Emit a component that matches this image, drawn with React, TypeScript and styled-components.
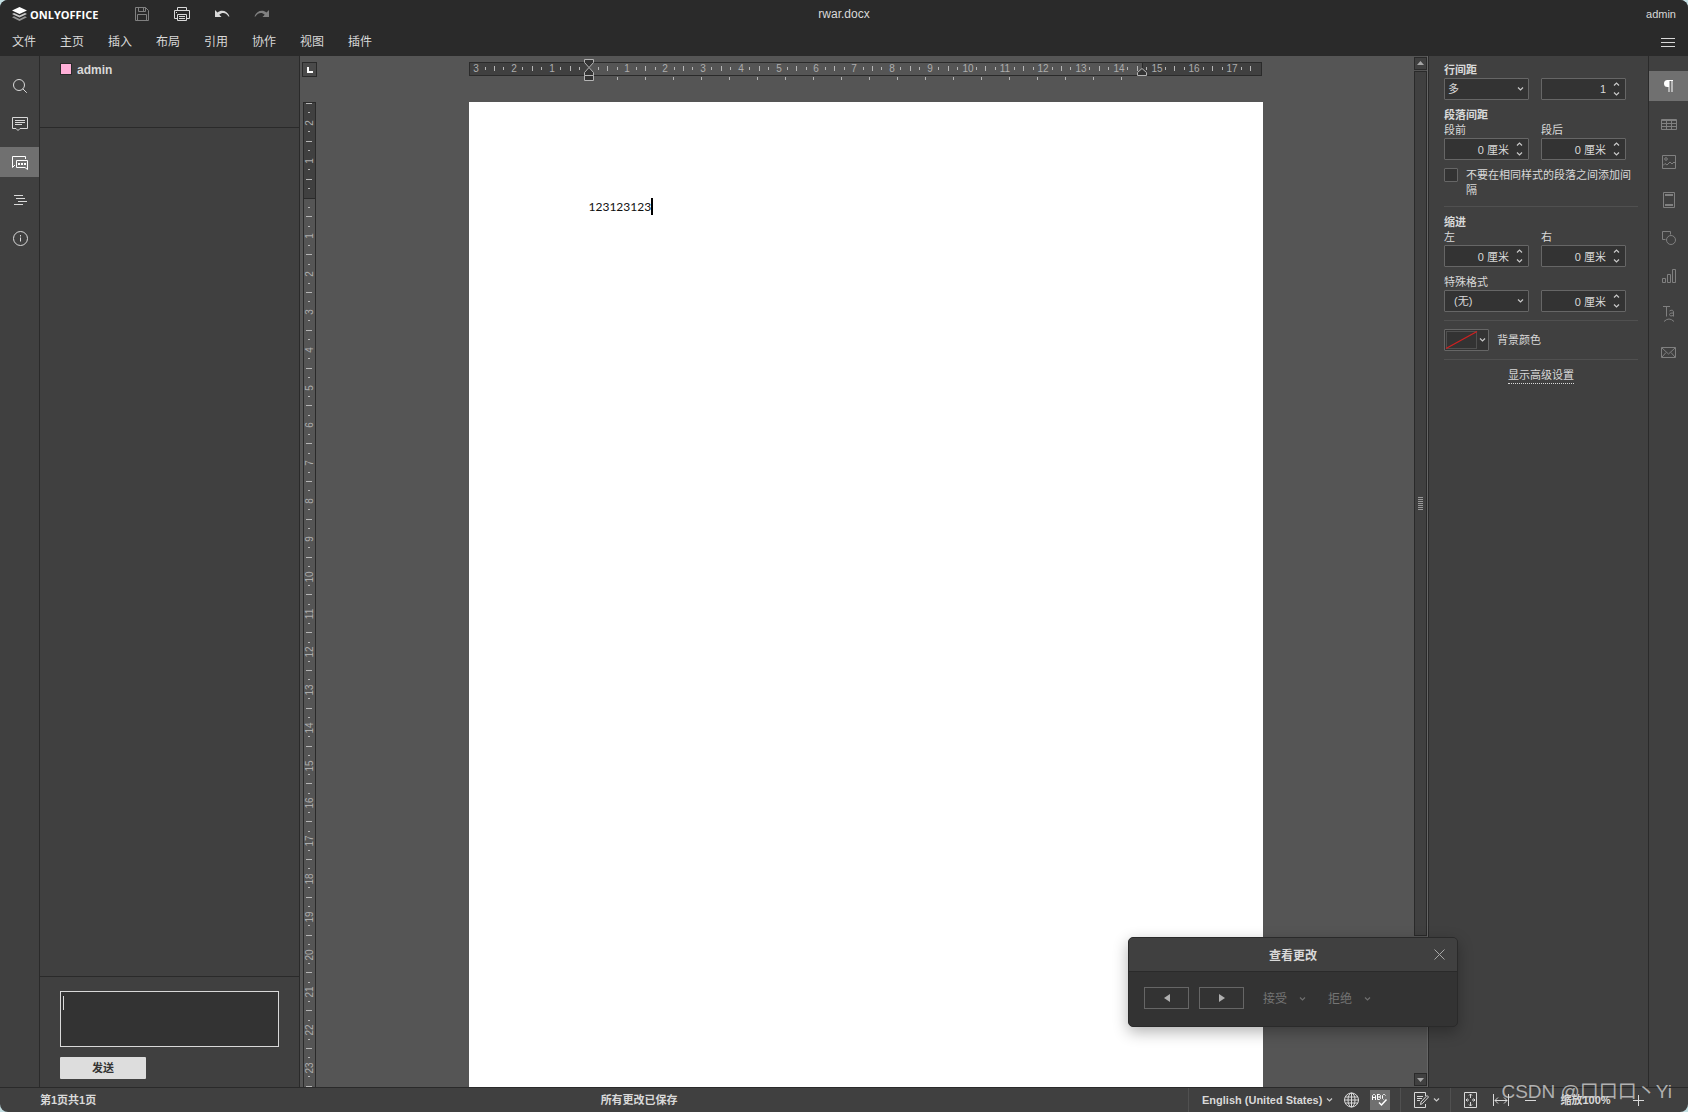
import React from "react";
import styled, { createGlobalStyle, css } from "styled-components";

const c = {
  header: "#2a2a2a",
  panel: "#404040",
  canvas: "#555555",
  field: "#333333",
  line: "#2a2a2a",
  fieldLine: "#666666",
  text: "#d9d9d9",
  muted: "#808080",
  active: "#707070",
};

const GlobalStyle = createGlobalStyle`
  *, *::before, *::after { box-sizing: border-box; }
  body {
    margin: 0;
    background: #c4dfe3;
    color: ${c.text};
    font: 11px/15px "Liberation Sans", "Noto Sans CJK SC", sans-serif;
  }
  button, input, select, textarea { font: inherit; color: inherit; margin: 0; padding: 0; }
  button { background: none; border: 0; }
  svg { display: block; flex: none; }
`;

const Shell = styled.div`
  position: relative;
  display: flex;
  flex-direction: column;
  height: 100vh;
  background: ${c.panel};
  border-radius: 8px;
  overflow: hidden;
`;

/* ---------- header ---------- */
const Header = styled.header`
  background: ${c.header};
`;
const TitleRow = styled.div`
  display: grid;
  grid-template-columns: 1fr auto 1fr;
  align-items: center;
  height: 28px;
  padding: 0 12px;
`;
const TitleLeft = styled.div`
  display: flex;
  align-items: center;
`;
const Brand = styled.div`
  display: flex;
  align-items: center;
  gap: 3px;
  width: 120px;
  color: #fff;
  font: 700 11px/15px "Open Sans", sans-serif;
`;
const QuickTools = styled.div`
  display: flex;
  gap: 20px;
`;
const QuickButton = styled.button<{ $dim?: boolean }>`
  display: grid;
  place-items: center;
  width: 20px;
  height: 20px;
  color: ${(p) => (p.$dim ? c.muted : c.text)};
`;
const DocName = styled.h1`
  margin: 0;
  font-size: 12px;
  font-weight: 400;
`;
const User = styled.span`
  justify-self: end;
`;
const TabRow = styled.nav`
  display: flex;
  align-items: center;
  height: 28px;
  padding-right: 13px;
`;
const Tab = styled.button`
  width: 48px;
  height: 28px;
  font-size: 12px;
`;
const MenuButton = styled.button`
  margin-left: auto;
`;

/* ---------- body ---------- */
const Body = styled.div`
  display: flex;
  flex: 1;
  min-height: 0;
`;
const Rail = styled.nav<{ $side: "left" | "right" }>`
  display: flex;
  flex-direction: column;
  gap: 8px;
  flex: none;
  width: 40px;
  padding-top: 15px;
  border-${(p) => (p.$side === "left" ? "right" : "left")}: 1px solid ${c.line};
`;
const RailButton = styled.button<{ $on?: boolean; $dim?: boolean }>`
  display: grid;
  place-items: center;
  height: 30px;
  padding-left: 1px;
  color: ${(p) => (p.$on ? "#fff" : p.$dim ? c.muted : c.text)};
  background: ${(p) => (p.$on ? c.active : "none")};
`;
const ChatPanel = styled.aside`
  display: flex;
  flex-direction: column;
  flex: none;
  width: 260px;
  border-right: 1px solid ${c.line};
`;
const Users = styled.ul`
  height: 72px;
  margin: 0;
  padding: 7px 20px;
  list-style: none;
  border-bottom: 1px solid ${c.line};
`;
const UserItem = styled.li`
  display: flex;
  gap: 5px;
  font-size: 12px;
  font-weight: 700;
`;
const Swatch = styled.span`
  width: 12px;
  height: 12px;
  background: #ffb0d8;
  border: 1px solid ${c.line};
`;
const Messages = styled.div`
  flex: 1;
`;
const Composer = styled.form`
  display: flex;
  flex-direction: column;
  gap: 10px;
  padding: 14px 20px 8px;
  border-top: 1px solid ${c.line};
`;
const MessageBox = styled.div`
  display: flex;
  height: 56px;
  padding: 4px 2px;
  background: ${c.field};
  border: 1px solid ${c.text};
`;
const Message = styled.textarea`
  flex: 1;
  background: none;
  border: 0;
  outline: 0;
  resize: none;
`;
const Caret = styled.span<{ $dark?: boolean }>`
  width: ${(p) => (p.$dark ? 2 : 1)}px;
  height: ${(p) => (p.$dark ? 17 : 14)}px;
  background: ${(p) => (p.$dark ? "#000" : c.text)};
`;
const SendButton = styled.button`
  width: 86px;
  height: 22px;
  color: #333;
  background: #ddd;
  border-radius: 1px;
  font-weight: 700;
`;

/* ---------- document ---------- */
const Editor = styled.main`
  display: grid;
  grid-template-columns: 17px 1fr;
  grid-template-rows: 46px 1fr;
  flex: 1;
  min-width: 0;
  background: ${c.canvas};
`;
const Corner = styled.button`
  display: grid;
  place-items: center;
  width: 15px;
  height: 15px;
  margin: 6px 0 0 2px;
  border: 1px solid ${c.line};
  background: #4a4a4a;
`;
const TopRuler = styled.div`
  display: flex;
  justify-content: center;
  padding-top: 1px;
`;
const SideRuler = styled.div`
  display: flex;
  justify-content: flex-end;
  padding-right: 1px;
  overflow: hidden;
`;
const Viewport = styled.div`
  display: flex;
  justify-content: center;
  overflow: hidden;
`;
const Paper = styled.article`
  width: 794px;
  height: 1123px;
  padding: 96px 120px;
  background: #fff;
  color: #111;
`;
const Line = styled.p`
  display: flex;
  align-items: center;
  margin: 0;
  font: 12px/17px Lato, sans-serif;
`;
const ScrollBar = styled.div`
  display: flex;
  flex-direction: column;
  gap: 1px;
  flex: none;
  width: 14px;
  padding: 1px 1px 1px 0;
  background: ${c.canvas};
  border-right: 1px solid #666;
`;
const ScrollButton = styled.button`
  display: grid;
  place-items: center;
  width: 13px;
  height: 13px;
  border: 1px solid ${c.line};
  background: ${c.panel};
`;
const ScrollTrack = styled.div`
  flex: 1;
`;
const Thumb = styled.div`
  display: grid;
  place-items: center;
  width: 13px;
  height: 86.4%;
  border: 1px solid ${c.line};
  background: ${c.panel};
`;
const Grip = styled.span`
  width: 5px;
  height: 13px;
  background: repeating-linear-gradient(#999 0 1px, ${c.panel} 1px 2px);
`;

/* ---------- paragraph settings ---------- */
const Settings = styled.aside`
  display: flex;
  flex-direction: column;
  gap: 8px;
  flex: none;
  width: 220px;
  padding: 7px 10px 0 15px;
  border-left: 1px solid ${c.line};
`;
const Group = styled.fieldset`
  margin: 0;
  padding: 0;
  border: 0;
  min-width: 0;
`;
const Pair = styled.div`
  display: flex;
  align-items: flex-end;
  gap: 12px;
`;
const Field = styled.div`
  display: flex;
  flex-direction: column;
  width: 85px;
`;
const Label = styled.label<{ $bold?: boolean }>`
  white-space: nowrap;
  font-weight: ${(p) => (p.$bold ? 700 : 400)};
`;
const Legend = styled.legend`
  padding: 0;
  font-weight: 700;
`;
const box = css`
  display: flex;
  align-items: center;
  height: 22px;
  background: ${c.field};
  border: 1px solid ${c.fieldLine};
  border-radius: 1px;
`;
const SelectBox = styled.div`
  ${box}
  padding-right: 4px;
`;
const SelectInput = styled.select<{ $indent?: boolean }>`
  flex: 1;
  min-width: 0;
  height: 20px;
  padding-left: ${(p) => (p.$indent ? 9 : 3)}px;
  appearance: none;
  background: none;
  border: 0;
  outline: 0;
`;
const SpinBox = styled.div`
  ${box}
`;
const SpinInput = styled.input`
  flex: 1;
  min-width: 0;
  height: 20px;
  padding-right: 2px;
  text-align: right;
  background: none;
  border: 0;
  outline: 0;
`;
const SpinButtons = styled.div`
  display: flex;
  flex-direction: column;
  width: 17px;
`;
const SpinButton = styled.button`
  display: grid;
  place-items: center;
  height: 10px;
`;
const Check = styled.label`
  display: flex;
  gap: 8px;
`;
const CheckInput = styled.input`
  flex: none;
  width: 14px;
  height: 14px;
  appearance: none;
  background: ${c.field};
  border: 1px solid ${c.fieldLine};
  border-radius: 1px;
`;
const Rule = styled.hr`
  width: 100%;
  height: 1px;
  margin: 0;
  border: 0;
  background: #505050;
`;
const ColorRow = styled.div`
  display: flex;
  align-items: center;
  gap: 8px;
`;
const ColorButton = styled.button`
  ${box}
  gap: 1px;
  width: 45px;
`;
const Advanced = styled.a`
  align-self: center;
  color: inherit;
  text-decoration: none;
  border-bottom: 1px dotted ${c.text};
`;

/* ---------- status bar ---------- */
const Status = styled.footer`
  display: flex;
  align-items: center;
  height: 25px;
  padding: 0 44px 0 40px;
  border-top: 1px solid ${c.line};
  font-weight: 700;
`;
const Saved = styled.span`
  flex: 1;
  padding-right: 6px;
  text-align: center;
`;
const StatusGroup = styled.div<{ $gap: number; $width: number }>`
  display: flex;
  align-items: center;
  align-self: stretch;
  gap: ${(p) => p.$gap}px;
  width: ${(p) => p.$width}px;
  padding-left: 13px;
  border-left: 1px solid #505050;
`;
const StatusButton = styled.button<{ $on?: boolean }>`
  display: flex;
  align-items: center;
  justify-content: center;
  gap: 4px;
  min-width: ${(p) => (p.$on ? 20 : 0)}px;
  height: 20px;
  font-weight: 700;
  white-space: nowrap;
  background: ${(p) => (p.$on ? c.active : "none")};
`;
const ZoomLabel = styled.span`
  width: 95px;
  text-align: center;
  white-space: nowrap;
`;

/* ---------- floating dialog ---------- */
const Dialog = styled.section`
  position: absolute;
  right: 230px;
  bottom: 85px;
  width: 330px;
  background: ${c.field};
  border: 1px solid ${c.line};
  border-radius: 5px;
  box-shadow: 0 5px 15px rgba(0, 0, 0, 0.3);
  overflow: hidden;
`;
const DialogHead = styled.div`
  display: grid;
  grid-template-columns: 36px 1fr 36px;
  align-items: center;
  height: 34px;
  background: ${c.panel};
  border-bottom: 1px solid ${c.line};
`;
const DialogTitle = styled.h2`
  grid-column: 2;
  margin: 0;
  padding-top: 3px;
  font-size: 12px;
  text-align: center;
`;
const DialogClose = styled.button`
  display: grid;
  place-items: center;
`;
const DialogBody = styled.div`
  display: flex;
  gap: 10px;
  padding: 15px;
`;
const StepButton = styled.button`
  display: grid;
  place-items: center;
  width: 45px;
  height: 22px;
  border: 1px solid ${c.fieldLine};
  color: #b0b0b0;
`;
const DecisionButton = styled.button`
  display: flex;
  align-items: center;
  gap: 12px;
  width: 55px;
  height: 24px;
  padding-left: 9px;
  font-size: 12px;
  white-space: nowrap;
  color: #757575;
`;
const Watermark = styled.div`
  position: absolute;
  right: 16px;
  bottom: 7px;
  font: 19px/26px "Liberation Sans", "Noto Sans CJK SC", sans-serif;
  color: rgba(215, 215, 215, 0.75);
  white-space: nowrap;
  pointer-events: none;
`;

/* ---------- icons ---------- */
type IconProps = { w: number; h: number; children: React.ReactNode };
const Icon = ({ w, h, children }: IconProps) => (
  <svg width={w} height={h} viewBox={`0 0 ${w} ${h}`} fill="none" stroke="currentColor" aria-hidden="true">
    {children}
  </svg>
);
const Chevron = ({ up }: { up?: boolean }) => (
  <Icon w={7} h={4}>
    <path d={up ? "M1 3.500L3.500 1 6 3.500" : "M1 .5L3.500 3 6 .5"} strokeWidth="1.200" opacity=".9" />
  </Icon>
);
const Logo = () => (
  <Icon w={15} h={14}>
    <g stroke="none" fill="#fff">
      <path d="M0 3.500L7.500 0 15 3.500 7.500 7z" />
      <path d="M0 7l2-1 5.500 2.600L13 6l2 1-7.500 3.500z" opacity=".75" />
      <path d="M0 10.300l2-1 5.500 2.600L13 9.300l2 1L7.500 14z" opacity=".5" />
    </g>
  </Icon>
);
const Save = () => (
  <Icon w={14} h={14}>
    <path d="M.5.5h10l3 3v10H.5zM3.500.5v4h7v-4M2.500 13.500v-6h9v6" />
    <path d="M8.500 1v3" />
  </Icon>
);
const Print = () => (
  <Icon w={16} h={14}>
    <path d="M3.500 3.500v-3h9v3M3.500 11.500h-3v-8h15v8h-3M3.500 7.500h9v6h-9zM5 9.500h6M5 11.500h6M2 5.500h1" />
  </Icon>
);
const Undo = ({ flip }: { flip?: boolean }) => (
  <Icon w={16} h={8}>
    <g transform={flip ? "translate(16 0) scale(-1 1)" : undefined} fill="currentColor" stroke="none">
      <path d="M1 0v7h6.500L5.300 4.700C8 2.200 12 2.500 14.500 6.500h1C13.500.8 7.500-.7 3.500 2.500z" />
    </g>
  </Icon>
);
const Menu = () => (
  <Icon w={14} h={10}>
    <path d="M0 1.500h14M0 5.500h14M0 9.500h14" />
  </Icon>
);
const Search = () => (
  <Icon w={14} h={14}>
    <circle cx="6" cy="6" r="5.500" />
    <path d="M9.800 9.800l4 4" />
  </Icon>
);
const Comment = () => (
  <Icon w={16} h={14}>
    <path d="M.5.5h15v11H8l-2 2-2-2H.5zM3 3.500h10M3 5.500h10M3 7.500h7" />
  </Icon>
);
const Chat = () => (
  <Icon w={16} h={16}>
    <path d="M13.500 5V2.500H.5v11L3 11M4.500 6.500h11v9L13 13.500H4.500z" />
    <path d="M6 10h8" strokeWidth="2" strokeDasharray="2 1" />
  </Icon>
);
const Outline = () => (
  <Icon w={14} h={10}>
    <path d="M1 .5h9M3 3.500h9M5 6.500h9M1 9.500h9" />
  </Icon>
);
const Info = () => (
  <Icon w={16} h={16}>
    <circle cx="8.500" cy="8.500" r="7" />
    <path d="M8.500 5v1.500M8.500 7.500v4" />
  </Icon>
);
const Pilcrow = () => (
  <Icon w={10} h={14}>
    <path d="M9 1H3.500a3.500 3.500 0 0 0 0 7h1v5h1V2h2v11h1V2H9z" fill="currentColor" stroke="none" />
  </Icon>
);
const Table = () => (
  <Icon w={16} h={12}>
    <path d="M.5 1.500h15v10H.5zM.5 2.500h15M.5 5.500h15M.5 8.500h15M5.500 2v10M10.500 2v10" />
  </Icon>
);
const Picture = () => (
  <Icon w={14} h={14}>
    <path d="M.5.5h13v13H.5zM1 10.500l2-2 2 1.500 3-3 2 2 2-2 1.500 1.500" />
    <circle cx="4" cy="4" r="1.300" />
  </Icon>
);
const HeaderFooter = () => (
  <Icon w={12} h={16}>
    <path d="M.5.5h11v15H.5z" />
    <path d="M2 3h8M2 13h8" strokeWidth="2" />
  </Icon>
);
const Shapes = () => (
  <Icon w={14} h={14}>
    <path d="M3.500 8.500h-3v-8h8v3" />
    <circle cx="9" cy="9" r="4.500" />
  </Icon>
);
const Chart = () => (
  <Icon w={14} h={14}>
    <path d="M.5 9.500h3v4h-3zM5.500 5.500h3v8h-3zM10.500.5h3v13h-3z" />
  </Icon>
);
const TextArt = () => (
  <Icon w={12} h={16}>
    <path d="M0 .5h7M3.500.5v10" />
    <path d="M6.500 5q3.500-2 4 1v4.500M10.500 7q-4-.5-4 1.500 0 2.500 4 1M1 15.500q5-5 10 0" />
  </Icon>
);
const Mail = () => (
  <Icon w={16} h={12}>
    <path d="M.5 1.500h14v10H.5zM1 2l6.500 6L14 2M1 11l4-4.500M14 11l-4-4.500" />
  </Icon>
);
const Globe = () => (
  <Icon w={15} h={16}>
    <circle cx="7.500" cy="8" r="7" />
    <ellipse cx="7.500" cy="8" rx="3.500" ry="7" />
    <path d="M7.500 1v14M1 5h13M0 8h15M1 11h13" />
  </Icon>
);
const Spelling = () => (
  <Icon w={16} h={14}>
    <g stroke="#fff">
      <path d="M.5 7V2.500l1-1h1l1 1V7M.5 4.500h3" />
      <path d="M5.500 1v5.500h2l1-1v-1l-1-.5 1-.5v-1l-1-1h-2M5.500 4h2.500" />
      <path d="M13.500 2.500l-1-1h-1l-1 1v3l1 1" />
      <path d="M7 9.500l2.500 2.500 5-5.500" strokeWidth="1.500" />
    </g>
  </Icon>
);
const Track = () => (
  <Icon w={15} h={16}>
    <path d="M11.500 4V.5H.5v15h11V12M3 4.500h6M3 6.500h5M3 8.500h3" />
    <path d="M6.500 12.500l.5-2.500 6-6.500 1.500 1.500-6 6.500z" />
  </Icon>
);
const FitPage = () => (
  <Icon w={13} h={16}>
    <path d="M.5.5h12v15H.5zM6.500 2v4M5 3.500L6.500 2 8 3.500M6.500 14v-4M5 12.500L6.500 14 8 12.500M2 8h3M3.500 6.500L2 8l1.500 1.500M11 8H8M9.500 6.500L11 8 9.500 9.500" />
  </Icon>
);
const FitWidth = () => (
  <Icon w={16} h={12}>
    <path d="M.5 0v12M15.500 0v12M2 6.500h12M5 3.500l-3 3 3 3M11 3.500l3 3-3 3" />
  </Icon>
);

/* ---------- rulers ---------- */
const CM = 37.8;
type Mark = { at: number; kind: "label" | "half" | "quarter"; text?: string };
const marks = (from: number, to: number): Mark[] => {
  const out: Mark[] = [];
  for (let q = Math.ceil((from + 3) / (CM / 4)); q * (CM / 4) < to - 3; q++) {
    if (q === 0) continue;
    const at = Math.floor(q * (CM / 4));
    if (q % 4 === 0) out.push({ at, kind: "label", text: String(Math.abs(q / 4)) });
    else out.push({ at, kind: q % 2 === 0 ? "half" : "quarter" });
  }
  return out;
};
const rulerFont = '10px "Liberation Sans", sans-serif';

const HorizontalRuler = () => (
  <svg width="794" height="30" viewBox="0 0 794 30" role="img" aria-label="水平标尺">
    <rect x=".5" y="5.500" width="792" height="13" fill="#555" stroke={c.line} />
    <rect x="1" y="6" width="119" height="12" fill={c.panel} />
    <rect x="673" y="6" width="119" height="12" fill={c.panel} />
    <path d="M673.500 5v13" stroke={c.line} />
    {marks(-120, 787).filter((m) => m.at < 665).map((m) =>
      m.kind === "label" ? (
        <text key={m.at} x={121 + m.at} y="15" textAnchor="middle" fill="#adadad" style={{ font: rulerFont }}>
          {m.text}
        </text>
      ) : (
        <rect key={m.at} x={120 + m.at} y={m.kind === "half" ? 9 : 10} width="1" height={m.kind === "half" ? 5 : 3} fill="#b5b5b5" />
      )
    )}
    {Array.from({ length: 19 }, (_, i) => (
      <rect key={i} x={148 + i * 28} y="20" width="1" height="3" fill="#b5b5b5" />
    ))}
    <g fill={c.field} stroke="#b5b5b5">
      <path d="M115.500 2.500h9v3l-4.500 5-4.500-5z" />
      <path d="M115.500 18.500v-3l4.500-5 4.500 5v3z" />
      <path d="M115.500 18.500h9v5h-9z" />
      <path d="M668.500 18.500v-3l4.500-4 4.500 4v3z" />
    </g>
  </svg>
);

const VerticalRuler = () => (
  <svg width="13" height="1123" viewBox="0 0 13 1123" role="img" aria-label="垂直标尺">
    <rect x=".5" y=".5" width="12" height="1122" fill="#555" stroke={c.line} />
    <rect x="1" y="1" width="11" height="95" fill={c.panel} />
    <path d="M0 96.500h13" stroke={c.line} />
    {marks(-98, 893).map((m) =>
      m.kind === "label" ? (
        <text
          key={m.at}
          textAnchor="middle"
          transform={`translate(10 ${97 + m.at}) rotate(-90)`}
          fill="#adadad"
          style={{ font: rulerFont }}
        >
          {m.text}
        </text>
      ) : (
        <rect key={m.at} x={m.kind === "half" ? 3 : 5} y={96 + m.at} width={m.kind === "half" ? 6 : 2} height="1" fill="#b5b5b5" />
      )
    )}
  </svg>
);

/* ---------- composed controls ---------- */
const Select = ({ id, value, indent }: { id: string; value: string; indent?: boolean }) => (
  <SelectBox>
    <SelectInput id={id} $indent={indent} defaultValue={value}>
      <option>{value}</option>
    </SelectInput>
    <Chevron />
  </SelectBox>
);
const Spinner = ({ id, value, label }: { id: string; value: string; label?: string }) => (
  <SpinBox>
    <SpinInput id={id} defaultValue={value} aria-label={label} />
    <SpinButtons>
      <SpinButton type="button" aria-label="增加">
        <Chevron up />
      </SpinButton>
      <SpinButton type="button" aria-label="减少">
        <Chevron />
      </SpinButton>
    </SpinButtons>
  </SpinBox>
);

const tabs = ["文件", "主页", "插入", "布局", "引用", "协作", "视图", "插件"];
const leftTools = [
  { name: "搜索", icon: <Search /> },
  { name: "批注", icon: <Comment /> },
  { name: "聊天", icon: <Chat />, on: true },
  { name: "导航", icon: <Outline /> },
  { name: "关于", icon: <Info /> },
];
const rightTools = [
  { name: "段落设置", icon: <Pilcrow />, on: true },
  { name: "表格设置", icon: <Table /> },
  { name: "图像设置", icon: <Picture /> },
  { name: "页眉页脚设置", icon: <HeaderFooter /> },
  { name: "形状设置", icon: <Shapes /> },
  { name: "图表设置", icon: <Chart /> },
  { name: "艺术字设置", icon: <TextArt /> },
  { name: "邮件合并", icon: <Mail /> },
];

export default function App() {
  return (
    <Shell>
      <GlobalStyle />
      <Header>
        <TitleRow>
          <TitleLeft>
            <Brand>
              <Logo />
              ONLYOFFICE
            </Brand>
            <QuickTools>
              <QuickButton $dim aria-label="保存"><Save /></QuickButton>
              <QuickButton aria-label="打印"><Print /></QuickButton>
              <QuickButton aria-label="撤消"><Undo /></QuickButton>
              <QuickButton $dim aria-label="重做"><Undo flip /></QuickButton>
            </QuickTools>
          </TitleLeft>
          <DocName>rwar.docx</DocName>
          <User>admin</User>
        </TitleRow>
        <TabRow>
          {tabs.map((t) => (
            <Tab key={t}>{t}</Tab>
          ))}
          <MenuButton aria-label="视图设置"><Menu /></MenuButton>
        </TabRow>
      </Header>

      <Body>
        <Rail $side="left">
          {leftTools.map((t) => (
            <RailButton key={t.name} aria-label={t.name} $on={t.on}>{t.icon}</RailButton>
          ))}
        </Rail>

        <ChatPanel>
          <Users>
            <UserItem><Swatch />admin</UserItem>
          </Users>
          <Messages />
          <Composer onSubmit={(e) => e.preventDefault()}>
            <MessageBox>
              <Caret />
              <Message aria-label="消息" />
            </MessageBox>
            <SendButton>发送</SendButton>
          </Composer>
        </ChatPanel>

        <Editor>
          <Corner aria-label="制表符">
            <Icon w={7} h={7}>
              <path d="M2 1v5h5" strokeWidth="2" stroke="#fff" />
            </Icon>
          </Corner>
          <TopRuler><HorizontalRuler /></TopRuler>
          <SideRuler><VerticalRuler /></SideRuler>
          <Viewport>
            <Paper>
              <Line>123123123<Caret $dark /></Line>
            </Paper>
          </Viewport>
        </Editor>

        <ScrollBar>
          <ScrollButton aria-label="向上滚动">
            <Icon w={7} h={5}><path d="M0 4l3.500-4L7 4z" fill="#a6a6a6" stroke="none" /></Icon>
          </ScrollButton>
          <ScrollTrack>
            <Thumb>
              <Grip />
            </Thumb>
          </ScrollTrack>
          <ScrollButton aria-label="向下滚动">
            <Icon w={7} h={5}><path d="M0 1l3.500 4L7 1z" fill="#a6a6a6" stroke="none" /></Icon>
          </ScrollButton>
        </ScrollBar>

        <Settings>
          <Pair>
            <Field>
              <Label $bold htmlFor="line-rule">行间距</Label>
              <Select id="line-rule" value="多" />
            </Field>
            <Field>
              <Spinner id="line-value" value="1" label="行间距值" />
            </Field>
          </Pair>
          <Group>
            <Legend>段落间距</Legend>
            <Pair>
              <Field>
                <Label htmlFor="before">段前</Label>
                <Spinner id="before" value="0 厘米" />
              </Field>
              <Field>
                <Label htmlFor="after">段后</Label>
                <Spinner id="after" value="0 厘米" />
              </Field>
            </Pair>
          </Group>
          <Check>
            <CheckInput type="checkbox" />
            不要在相同样式的段落之间添加间隔
          </Check>
          <Rule />
          <Group>
            <Legend>缩进</Legend>
            <Pair>
              <Field>
                <Label htmlFor="left">左</Label>
                <Spinner id="left" value="0 厘米" />
              </Field>
              <Field>
                <Label htmlFor="right">右</Label>
                <Spinner id="right" value="0 厘米" />
              </Field>
            </Pair>
          </Group>
          <Pair>
            <Field>
              <Label htmlFor="special">特殊格式</Label>
              <Select id="special" value="(无)" indent />
            </Field>
            <Field>
              <Spinner id="special-value" value="0 厘米" label="特殊格式值" />
            </Field>
          </Pair>
          <Rule />
          <ColorRow>
            <ColorButton id="fill" aria-label="背景颜色">
              <Icon w={33} h={20}>
                <rect x="1.500" y="1.500" width="30" height="17" stroke="#505050" />
                <path d="M1 18.500L32 1.500" stroke="#d02020" strokeWidth="1.300" />
              </Icon>
              <Chevron />
            </ColorButton>
            <Label htmlFor="fill">背景颜色</Label>
          </ColorRow>
          <Rule />
          <Advanced href="#advanced">显示高级设置</Advanced>
        </Settings>

        <Rail $side="right">
          {rightTools.map((t) => (
            <RailButton key={t.name} aria-label={t.name} $on={t.on} $dim>{t.icon}</RailButton>
          ))}
        </Rail>
      </Body>

      <Status>
        <span>第1页共1页</span>
        <Saved>所有更改已保存</Saved>
        <StatusGroup $gap={11} $width={212}>
          <StatusButton>English (United States)<Chevron /></StatusButton>
          <StatusButton aria-label="设置文档语言"><Globe /></StatusButton>
          <StatusButton $on aria-label="拼写检查"><Spelling /></StatusButton>
        </StatusGroup>
        <StatusGroup $gap={0} $width={50}>
          <StatusButton aria-label="跟踪更改"><Track /><Chevron /></StatusButton>
        </StatusGroup>
        <StatusGroup $gap={16} $width={88}>
          <StatusButton aria-label="适合页面"><FitPage /></StatusButton>
          <StatusButton aria-label="适合宽度"><FitWidth /></StatusButton>
          <StatusButton aria-label="缩小">
            <Icon w={11} h={12}><path d="M0 6.500h11" /></Icon>
          </StatusButton>
        </StatusGroup>
        <ZoomLabel>缩放100%</ZoomLabel>
        <StatusButton aria-label="放大">
          <Icon w={11} h={12}><path d="M0 6.500h11M5.500 1v11" /></Icon>
        </StatusButton>
      </Status>

      <Dialog role="dialog" aria-label="查看更改">
        <DialogHead>
          <DialogTitle>查看更改</DialogTitle>
          <DialogClose aria-label="关闭">
            <Icon w={11} h={11}><path d="M.5.5l10 10M10.500.5l-10 10" stroke="#a6a6a6" /></Icon>
          </DialogClose>
        </DialogHead>
        <DialogBody>
          <StepButton aria-label="上一处">
            <Icon w={7} h={8}><path d="M7 0v8L1 4z" fill="currentColor" stroke="none" /></Icon>
          </StepButton>
          <StepButton aria-label="下一处">
            <Icon w={7} h={8}><path d="M1 0v8l6-4z" fill="currentColor" stroke="none" /></Icon>
          </StepButton>
          <DecisionButton>接受<Chevron /></DecisionButton>
          <DecisionButton>拒绝<Chevron /></DecisionButton>
        </DialogBody>
      </Dialog>

      <Watermark>CSDN @口口口丶Yi</Watermark>
    </Shell>
  );
}
